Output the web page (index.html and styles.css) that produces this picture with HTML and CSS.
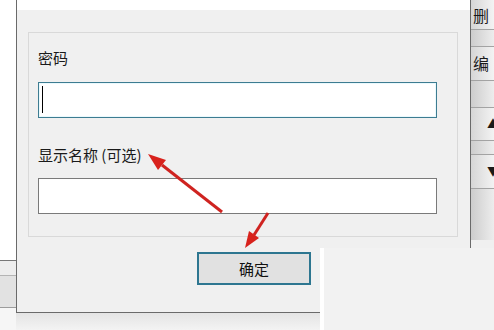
FILE: index.html
```html
<!DOCTYPE html>
<html lang="zh-CN">
<head>
<meta charset="UTF-8">
<title>添加账户</title>
<link rel="stylesheet" href="styles.css">
</head>
<body>

<div class="desktop">
    <div class="side-left">
        <div class="bg-top"></div>
        <div class="bg-row"></div>
        <div class="bg-row2"></div>
        <div class="bg-bottom"></div>
    </div>

    <div class="middle">
        <div class="dialog">
            <div class="titlebar"></div>
            <div class="dialog-body">
                <div class="group">
                    <div class="field-label">密码</div>
                    <div class="field field-focus"><span class="caret"></span></div>
                    <div class="field-label second">显示名称 (可选)</div>
                    <div class="field field-name"></div>
                </div>
                <div class="actions">
                    <button class="ok-btn">确定</button>
                </div>
            </div>
        </div>
        <div class="under"></div>
    </div>

    <div class="side-right">
        <div class="side-stack">
            <div class="rbtn rbtn-first">删</div>
            <div class="rbtn">编</div>
            <div class="rbtn rbtn-arrow">▲</div>
            <div class="rbtn rbtn-arrow rbtn-down">▼</div>
        </div>
        <div class="side-rest"></div>
    </div>

    <!-- 右下角遮挡块 -->
    <div class="patch"></div>

    <!-- 红色标注箭头 -->
    <svg class="arrows" width="494" height="330" viewBox="0 0 494 330">
        <line x1="222" y1="212" x2="162" y2="165" />
        <polygon points="148,154 166,160 158,170" />
        <line x1="268" y1="213" x2="254" y2="235" />
        <polygon points="245,248 259,238 249,231" />
    </svg>
</div>

</body>
</html>
```

FILE: styles.css
```css
body {
    margin: 0;
    padding: 0;
    background-color: #ffffff;
    font-family: "Noto Sans CJK SC", "Noto Sans", sans-serif;
    color: #1a1a1a;
}

.desktop {
    position: relative;
    display: flex;
    width: 494px;
    height: 330px;
    overflow: hidden;
}

/* 左侧背景窗口 */
.side-left {
    width: 16px;
    flex-shrink: 0;
    display: flex;
    flex-direction: column;
}

.bg-top {
    height: 260px;
    background-color: #ffffff;
    border-bottom: 1px solid #777777;
}

.bg-row {
    height: 14px;
    background-color: #ededed;
    border-bottom: 1px solid #b4b4b4;
}

.bg-row2 {
    height: 31px;
    background-color: #e2e2e2;
    border-bottom: 1px solid #9c9c9c;
}

.bg-bottom {
    flex: 1;
    background-color: #f6f6f6;
}

/* 对话框 */
.middle {
    width: 455px;
    flex-shrink: 0;
    display: flex;
    flex-direction: column;
}

.dialog {
    height: 313px;
    box-sizing: border-box;
    border-left: 1px solid #6a6a6a;
    border-right: 1px solid #6a6a6a;
    border-bottom: 1px solid #6a6a6a;
    background-color: #f0f0f0;
    display: flex;
    flex-direction: column;
}

.titlebar {
    height: 10px;
    background-color: #ffffff;
}

.dialog-body {
    flex: 1;
    padding: 22px 12px 0 11px;
}

.group {
    border: 1px solid #d9d9d9;
    padding: 15px 20px 22px 9px;
}

.field-label {
    font-size: 15px;
    line-height: 20px;
    height: 20px;
}

.field-label.second {
    margin-top: 27px;
}

.field {
    height: 36px;
    box-sizing: border-box;
    background-color: #ffffff;
    border: 1px solid #7a7a7a;
    margin-top: 14px;
}

.field-name {
    margin-top: 13px;
}

.field-focus {
    border-color: #3d7c91;
    box-shadow: inset 0 0 0 1px #eaf9fd;
    padding: 3px 0 0 3px;
}

.caret {
    display: block;
    width: 1px;
    height: 27px;
    background-color: #000000;
}

.actions {
    padding: 15px 0 0 169px;
}

.ok-btn {
    width: 114px;
    height: 33px;
    box-sizing: border-box;
    background-color: #e1e1e1;
    border: 2px solid #2d7690;
    font-family: "Noto Sans CJK SC", "Noto Sans", sans-serif;
    font-size: 15px;
    color: #111111;
    padding: 0;
}

.under {
    flex: 1;
    background: linear-gradient(#e4e4e4, #f3f3f3);
}

/* 右侧背景按钮栏 */
.side-right {
    flex: 1;
    min-width: 0;
    overflow: hidden;
    display: flex;
    flex-direction: column;
}

.side-stack {
    height: 240px;
    background: linear-gradient(to right, #cdcdcd, #ededed);
}

.side-rest {
    flex: 1;
    background-color: #f0f0f0;
}

.rbtn {
    height: 33px;
    box-sizing: border-box;
    border-top: 1px solid #a3a3a3;
    border-bottom: 1px solid #a3a3a3;
    padding-left: 2px;
    font-size: 16px;
    line-height: 31px;
    white-space: nowrap;
    background: linear-gradient(to right, #d6d6d6, #f3f3f3);
}

.rbtn-first {
    height: 30px;
    border-top: none;
    line-height: 30px;
    margin-bottom: 16px;
}

.rbtn-first + .rbtn {
    height: 35px;
    line-height: 33px;
    margin-bottom: 26px;
}

.rbtn-arrow {
    padding-left: 16px;
    font-size: 12px;
    height: 34px;
    line-height: 32px;
    margin-bottom: 13px;
}

.rbtn-down {
    height: 35px;
    margin-bottom: 0;
}

.patch {
    position: absolute;
    left: 320px;
    top: 248px;
    right: 0;
    bottom: 0;
    background-color: #f2f2f2;
    border-left: 4px solid #ffffff;
}

.arrows {
    position: absolute;
    left: 0;
    top: 0;
    pointer-events: none;
}

.arrows line {
    stroke: #cf2320;
    stroke-width: 3;
}

.arrows polygon {
    fill: #d8221c;
}
```
